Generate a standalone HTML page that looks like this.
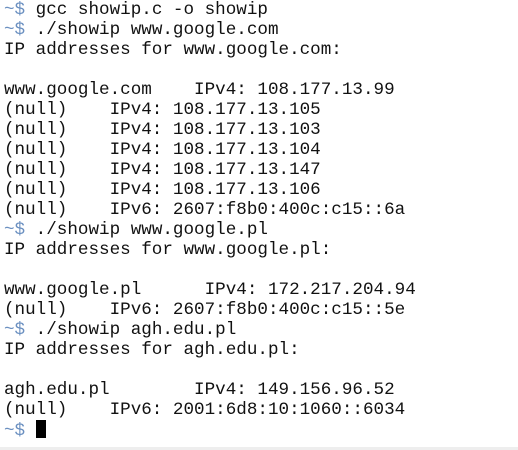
<!DOCTYPE html>
<html><head><style>
html,body{margin:0;padding:0;background:#fff;width:518px;height:450px;overflow:hidden}
pre{margin:0;position:absolute;left:4px;top:0px;font-family:"Liberation Mono",monospace;font-size:17.6px;line-height:20px;color:#111}
.p{color:#6a8fc0}
.cur{display:inline-block;width:10px;height:18px;background:#000;vertical-align:-3px}
.bar{position:absolute;left:0;top:447px;width:518px;height:3px;background:#eee}
</style></head><body>
<pre><span class="p">~$</span> gcc showip.c -o showip
<span class="p">~$</span> ./showip www.google.com
IP addresses for www.google.com:

www.google.com    IPv4: 108.177.13.99
(null)    IPv4: 108.177.13.105
(null)    IPv4: 108.177.13.103
(null)    IPv4: 108.177.13.104
(null)    IPv4: 108.177.13.147
(null)    IPv4: 108.177.13.106
(null)    IPv6: 2607:f8b0:400c:c15::6a
<span class="p">~$</span> ./showip www.google.pl
IP addresses for www.google.pl:

www.google.pl      IPv4: 172.217.204.94
(null)    IPv6: 2607:f8b0:400c:c15::5e
<span class="p">~$</span> ./showip agh.edu.pl
IP addresses for agh.edu.pl:

agh.edu.pl        IPv4: 149.156.96.52
(null)    IPv6: 2001:6d8:10:1060::6034
<span class="p">~$</span> <span class="cur"></span></pre>
<div class="bar"></div>
</body></html>
